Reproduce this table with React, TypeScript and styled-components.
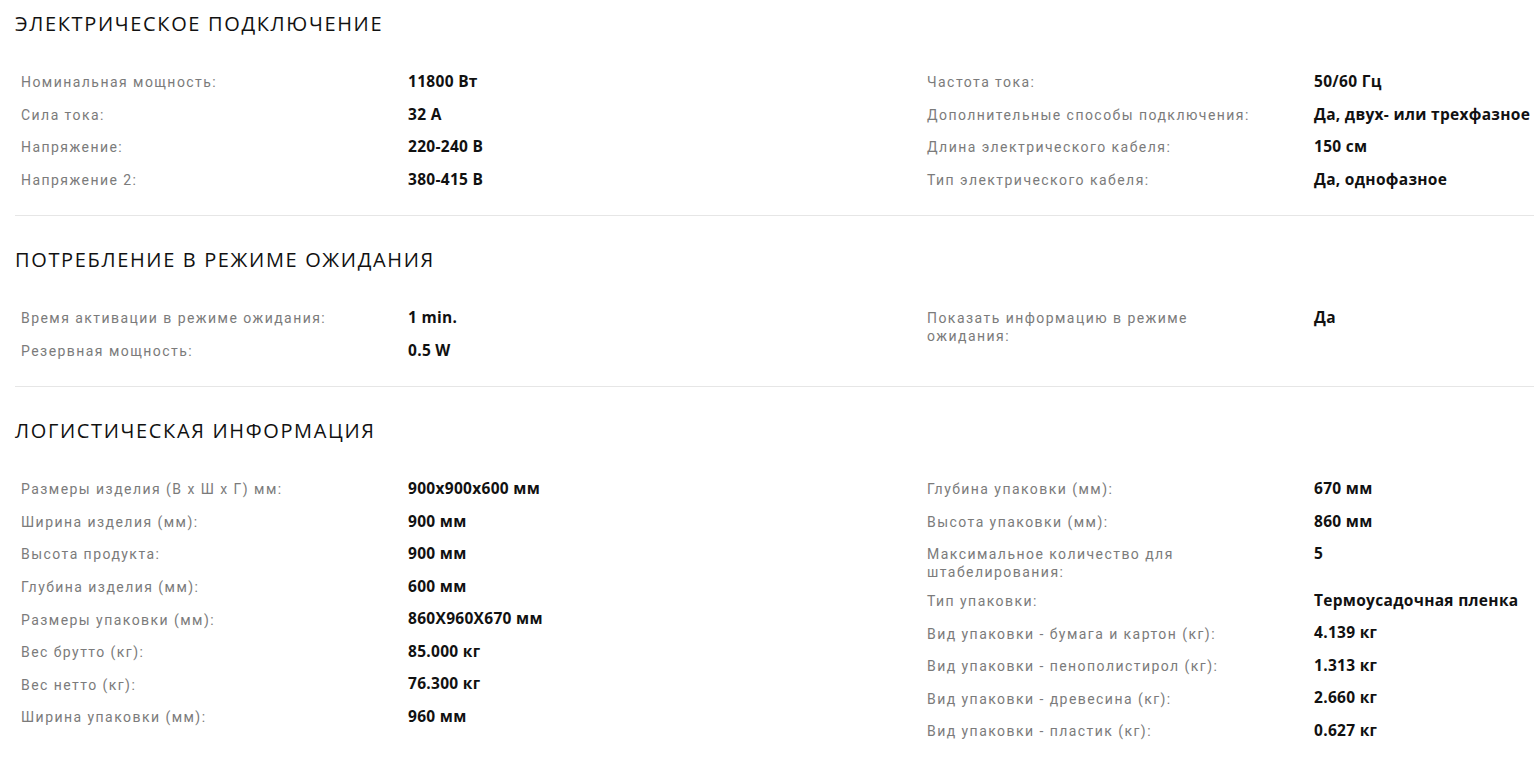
import React from "react";
import styled, { createGlobalStyle } from "styled-components";

const Global = createGlobalStyle`
  html, body { margin: 0; padding: 0; background: #fff; overflow-x: hidden; }
  body { font-family: "Open Sans", Arial, sans-serif; }
`;

const Page = styled.div`
  margin-left: 15px;
  width: 1519px;
  padding-top: 12px;
`;

const Section = styled.section<{ $last?: boolean }>`
  padding-bottom: 20px;
  border-bottom: ${(p) => (p.$last ? "none" : "1px solid #e6e6e6")};
  & + & { padding-top: 32px; }
`;

const Heading = styled.h2`
  margin: 0 0 28.7px;
  font-family: "Open Sans", Arial, sans-serif;
  font-weight: 400;
  font-size: 20px;
  line-height: 24px;
  letter-spacing: 1.65px;
  color: #111;
  text-transform: uppercase;
`;

const Columns = styled.div`
  display: grid;
  grid-template-columns: 906px 1fr;
  align-items: start;
`;

const List = styled.dl`
  margin: 0;
  display: grid;
  grid-template-columns: 393px 1fr;
`;

const Label = styled.dt`
  padding: 8.6px 55px 2px 6px;
  font-family: Roboto, "Liberation Sans", sans-serif;
  font-size: 14px;
  line-height: 18px;
  letter-spacing: 1.45px;
  color: #7b7b7b;
`;

const Value = styled.dd`
  margin: 0;
  padding: 5.3px 0;
  font-family: "Open Sans", Arial, sans-serif;
  font-weight: 700;
  font-size: 15.5px;
  line-height: 22px;
  letter-spacing: 0.3px;
  color: #111;
  white-space: nowrap;
`;

type Row = [string, string];

const sections: { title: string; left: Row[]; right: Row[] }[] = [
  {
    title: "Электрическое подключение",
    left: [
      ["Номинальная мощность:", "11800 Вт"],
      ["Сила тока:", "32 A"],
      ["Напряжение:", "220-240 В"],
      ["Напряжение 2:", "380-415 В"],
    ],
    right: [
      ["Частота тока:", "50/60 Гц"],
      ["Дополнительные способы подключения:", "Да, двух- или трехфазное"],
      ["Длина электрического кабеля:", "150 см"],
      ["Тип электрического кабеля:", "Да, однофазное"],
    ],
  },
  {
    title: "Потребление в режиме ожидания",
    left: [
      ["Время активации в режиме ожидания:", "1 min."],
      ["Резервная мощность:", "0.5 W"],
    ],
    right: [["Показать информацию в режиме ожидания:", "Да"]],
  },
  {
    title: "Логистическая информация",
    left: [
      ["Размеры изделия (В x Ш x Г) мм:", "900x900x600 мм"],
      ["Ширина изделия (мм):", "900 мм"],
      ["Высота продукта:", "900 мм"],
      ["Глубина изделия (мм):", "600 мм"],
      ["Размеры упаковки (мм):", "860X960X670 мм"],
      ["Вес брутто (кг):", "85.000 кг"],
      ["Вес нетто (кг):", "76.300 кг"],
      ["Ширина упаковки (мм):", "960 мм"],
    ],
    right: [
      ["Глубина упаковки (мм):", "670 мм"],
      ["Высота упаковки (мм):", "860 мм"],
      ["Максимальное количество для штабелирования:", "5"],
      ["Тип упаковки:", "Термоусадочная пленка"],
      ["Вид упаковки - бумага и картон (кг):", "4.139 кг"],
      ["Вид упаковки - пенополистирол (кг):", "1.313 кг"],
      ["Вид упаковки - древесина (кг):", "2.660 кг"],
      ["Вид упаковки - пластик (кг):", "0.627 кг"],
    ],
  },
];

function SpecList({ rows }: { rows: Row[] }) {
  return (
    <List>
      {rows.map(([l, v]) => (
        <React.Fragment key={l}>
          <Label>{l}</Label>
          <Value>{v}</Value>
        </React.Fragment>
      ))}
    </List>
  );
}

export default function App() {
  return (
    <>
      <Global />
      <Page>
        {sections.map((s, i) => (
          <Section key={s.title} $last={i === sections.length - 1}>
            <Heading>{s.title}</Heading>
            <Columns>
              <SpecList rows={s.left} />
              <SpecList rows={s.right} />
            </Columns>
          </Section>
        ))}
      </Page>
    </>
  );
}
